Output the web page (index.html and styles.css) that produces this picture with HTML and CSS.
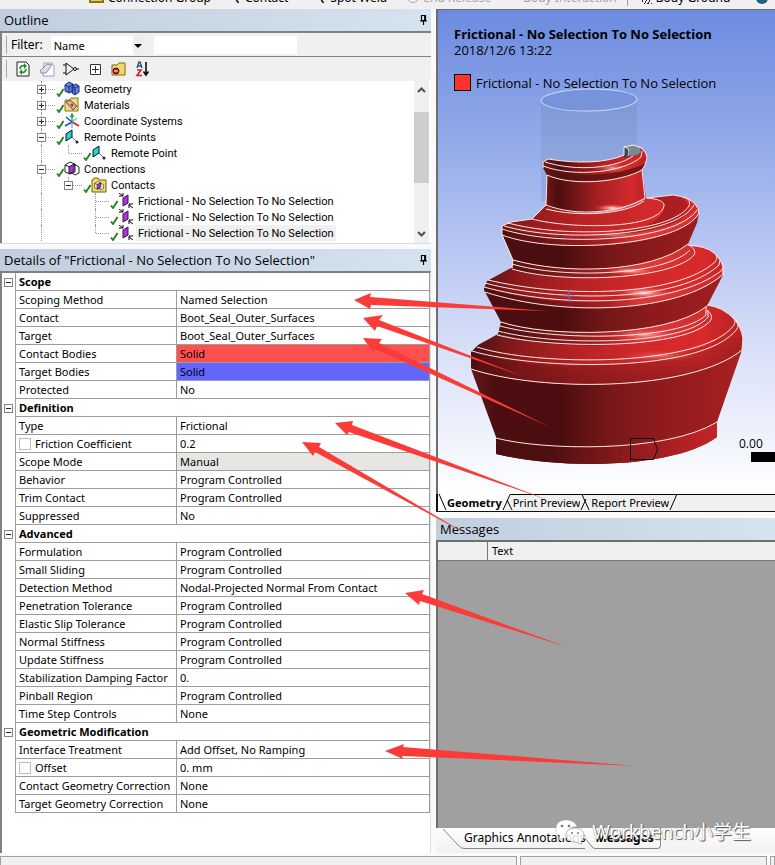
FILE: index.html
```html
<!DOCTYPE html>
<html lang="en">
<head>
<meta charset="utf-8">
<title>Mechanical - Connections</title>
<link rel="stylesheet" href="styles.css">
</head>
<body>
<svg class="defs" width="0" height="0" aria-hidden="true">
  <defs>
    <symbol id="check" viewBox="0 0 8 9"><path d="M1 5.5 3 8 7.5 1" fill="none" stroke="#16861f" stroke-width="1.8"/></symbol>
    <symbol id="pin" viewBox="0 0 8 10"><path d="M2.5.5h4v5h-4zM1 6h7M4.500 6v4M5.700 1v5" fill="none" stroke="#000" stroke-width="1.2"/></symbol>
    <symbol id="remote" viewBox="0 0 16 16"><path d="M2 5 8 1v7l-6 4z" fill="#20d4dc" stroke="#111"/><path d="m8 8 5 5" stroke="#667"/><circle cx="13" cy="13" r="1.500" fill="#224"/></symbol>
    <symbol id="contact" viewBox="0 0 16 16"><path d="m5 5 5-3v8l-5 3z" fill="#b233dc" stroke="#38104a"/><path d="m1 0 4 3M5 0v3H1M15 15l-4-3M11 15v-4h4" stroke="#000" fill="none"/></symbol>
    <symbol id="cubes" viewBox="0 0 16 16"><path d="m1 4 5-3 5 2v8l-5 2-5-2zM1 4l5 2 5-3M6 6v7M8 5l4-1 3 2v6l-4 2-3-2z" fill="#fff" stroke="#222"/><path d="m5 6 5-3v7l-5 3z" fill="#a03bd0" stroke="#301040"/></symbol>
  </defs>
</svg>

<nav class="ribbon" aria-label="Connections">
  <button class="cmd group"><i class="folder"></i>Connection Group</button>
  <button class="cmd contact"><i class="tick"></i>Contact</button>
  <button class="cmd spot"><i class="tick"></i>Spot Weld</button>
  <button class="cmd release" disabled><i class="ring"></i>End Release</button>
  <button class="cmd inter" disabled>Body Interaction</button>
  <button class="cmd ground"><i class="hatch"></i>Body Ground</button>
  <i class="globe"></i>
</nav>

<main class="work">
  <div class="left">
    <section class="outline">
      <h2 class="caption">Outline <svg class="pin" width="8" height="10"><use href="#pin"/></svg></h2>
      <div class="filter">
        <label for="by">Filter:</label>
        <span class="pick"><select id="by"><option>Name</option></select></span>
        <input type="text" aria-label="Filter text">
      </div>
      <div class="tools">
        <button aria-label="Refresh"><svg width="16" height="16" viewBox="0 0 16 16"><path d="M2 1h9l3 3v11H2z" fill="#fff" stroke="#222"/><path d="M5 8c0-3 3-4 5-3M11 8c0 3-3 4-5 3" fill="none" stroke="#1b9425" stroke-width="1.800"/><path d="m9 2 3 3-3 3zM7 8l-3 3 3 3z" fill="#1b9425"/></svg></button>
        <button aria-label="Clear"><svg width="16" height="16" viewBox="0 0 16 16"><path d="M5 2h8l2 3v10H4z" fill="#fff" stroke="#9aa0aa"/><path d="m1 10 7-7 5 1-6 8H2z" fill="#d8def0" stroke="#858ca8"/></svg></button>
        <button aria-label="Collapse"><svg width="16" height="16" viewBox="0 0 16 16"><path d="M0 4h3M0 12h3M3 2v12l8-6zM13 8h3" fill="none" stroke="#111"/><circle cx="12" cy="8" r="1.500" fill="#fff" stroke="#111"/></svg></button>
        <button aria-label="Expand"><svg width="16" height="16" viewBox="0 0 16 16"><path d="M3.500 3.500h10v10h-10zM5 8.500h7M8.500 5v7" fill="#fff" stroke="#333"/></svg></button>
        <button aria-label="Hide folders"><svg width="16" height="16" viewBox="0 0 16 16"><path d="M1 4h5l2-2h6v12H1z" fill="#f0da67" stroke="#7d6a1c"/><circle cx="5" cy="10" r="3" fill="#c9222c" stroke="#501"/><path d="M3 10h4" stroke="#fff"/></svg></button>
        <button aria-label="Sort"><svg width="16" height="16" viewBox="0 0 16 16"><path d="m2 7 2-6h1l2 6M3 5h3" fill="none" stroke="#275a85" stroke-width="1.500"/><path d="M2 9h4l-4 5.500h5" fill="none" stroke="#c32032" stroke-width="1.600"/><path d="M11 1v12M8.500 10.500 11 14l2.500-3.500" fill="none" stroke="#111" stroke-width="1.600"/></svg></button>
      </div>
      <div class="treebox">
        <ul class="tree">
          <li><span class="g v h"><button class="x plus" aria-label="Expand Geometry"></button></span><svg class="ic" viewBox="0 0 27 16"><use href="#check" x="1" y="7" width="8" height="9"/><path d="m10 4 4-3 4 2v7l-4 2-4-2zM17 5l4-2 3 2v6l-4 3-3-2z" fill="#5f85ec" stroke="#172b6d"/><path d="m10 4 4 2 4-3M14 6v6M17 5l3 2 4-2M20 7v6" fill="none" stroke="#172b6d"/></svg><span class="t">Geometry</span></li>
          <li><span class="g v h"><button class="x plus" aria-label="Expand Materials"></button></span><svg class="ic" viewBox="0 0 27 16"><use href="#check" x="1" y="7" width="8" height="9"/><path d="M10 3h5l1-2h7v13H10z" fill="#f1dd73" stroke="#857427"/><path d="m11 5 4-2 7 6-4 4z" fill="#d2b3ae" stroke="#664a4a"/><circle cx="17" cy="8" r="1.500" fill="#b33"/></svg><span class="t">Materials</span></li>
          <li><span class="g v h"><button class="x plus" aria-label="Expand Coordinate Systems"></button></span><svg class="ic" viewBox="0 0 27 16"><use href="#check" x="1" y="7" width="8" height="9"/><path d="M17 9V1m-1.500 3L17 1l1.500 3" stroke="#13a13b" fill="none" stroke-width="1.300"/><path d="m17 9-7 4M17 9l-6-5" stroke="#2448dd" stroke-width="1.500"/><path d="m17 9 7 4" stroke="#d22" stroke-width="2"/><path d="m17 9 5-4M17 9v6" stroke="#18b2c5"/></svg><span class="t">Coordinate Systems</span></li>
          <li><span class="g v h"><button class="x" aria-label="Collapse Remote Points"></button></span><svg class="ic" viewBox="0 0 27 16"><use href="#check" x="1" y="7" width="8" height="9"/><use href="#remote" x="9" width="16" height="16"/></svg><span class="t">Remote Points</span></li>
          <li><span class="g v"></span><span class="g e h"></span><svg class="ic" viewBox="0 0 27 16"><use href="#check" x="1" y="7" width="8" height="9"/><use href="#remote" x="9" width="16" height="16"/></svg><span class="t">Remote Point</span></li>
          <li><span class="g v h"><button class="x" aria-label="Collapse Connections"></button></span><svg class="ic" viewBox="0 0 27 16"><use href="#check" x="1" y="7" width="8" height="9"/><use href="#cubes" x="9" width="16" height="16"/></svg><span class="t">Connections</span></li>
          <li><span class="g v"></span><span class="g e h"><button class="x" aria-label="Collapse Contacts"></button></span><svg class="ic" viewBox="0 0 27 16"><use href="#check" x="1" y="7" width="8" height="9"/><path d="M10 3h1l1-2h4l1 2h7v12H10z" fill="#f0dc62" stroke="#6f5e14"/><use href="#cubes" x="12" y="4" width="10" height="10"/></svg><span class="t">Contacts</span></li>
          <li><span class="g v"></span><span class="g"></span><span class="g v h"></span><svg class="ic" viewBox="0 0 27 16"><use href="#check" x="1" y="7" width="8" height="9"/><use href="#contact" x="9" width="16" height="16"/></svg><span class="t">Frictional - No Selection To No Selection</span></li>
          <li><span class="g v"></span><span class="g"></span><span class="g v h"></span><svg class="ic" viewBox="0 0 27 16"><use href="#check" x="1" y="7" width="8" height="9"/><use href="#contact" x="9" width="16" height="16"/></svg><span class="t">Frictional - No Selection To No Selection</span></li>
          <li><span class="g v"></span><span class="g"></span><span class="g e h"></span><svg class="ic" viewBox="0 0 27 16"><use href="#check" x="1" y="7" width="8" height="9"/><use href="#contact" x="9" width="16" height="16"/></svg><span class="t sel">Frictional - No Selection To No Selection</span></li>
        </ul>
        <div class="scroll">
          <svg width="9" height="6" viewBox="0 0 9 6"><path d="m1 5 3.500-3.500L8 5" fill="none" stroke="#505050" stroke-width="2"/></svg>
          <i class="thumb"></i>
          <svg width="9" height="6" viewBox="0 0 9 6"><path d="m1 1 3.500 3.500L8 1" fill="none" stroke="#505050" stroke-width="2"/></svg>
        </div>
      </div>
    </section>

    <section class="details">
      <h2 class="caption">Details of "Frictional - No Selection To No Selection" <svg class="pin" width="8" height="10"><use href="#pin"/></svg></h2>
      <div class="sheet">
        <table class="props">
          <colgroup><col class="c0"><col class="c1"><col></colgroup>
          <tr class="sec"><td><button class="x" aria-label="Collapse Scope"></button></td><th colspan="2">Scope</th></tr>
          <tr><td></td><td>Scoping Method</td><td>Named Selection</td></tr>
          <tr><td></td><td>Contact</td><td>Boot_Seal_Outer_Surfaces</td></tr>
          <tr><td></td><td>Target</td><td>Boot_Seal_Outer_Surfaces</td></tr>
          <tr><td></td><td>Contact Bodies</td><td class="red">Solid</td></tr>
          <tr><td></td><td>Target Bodies</td><td class="blue">Solid</td></tr>
          <tr><td></td><td>Protected</td><td>No</td></tr>
          <tr class="sec"><td><button class="x" aria-label="Collapse Definition"></button></td><th colspan="2">Definition</th></tr>
          <tr><td></td><td>Type</td><td>Frictional</td></tr>
          <tr><td></td><td><label><input type="checkbox">Friction Coefficient</label></td><td>0.2</td></tr>
          <tr><td></td><td>Scope Mode</td><td class="grey">Manual</td></tr>
          <tr><td></td><td>Behavior</td><td>Program Controlled</td></tr>
          <tr><td></td><td>Trim Contact</td><td>Program Controlled</td></tr>
          <tr><td></td><td>Suppressed</td><td>No</td></tr>
          <tr class="sec"><td><button class="x" aria-label="Collapse Advanced"></button></td><th colspan="2">Advanced</th></tr>
          <tr><td></td><td>Formulation</td><td>Program Controlled</td></tr>
          <tr><td></td><td>Small Sliding</td><td>Program Controlled</td></tr>
          <tr><td></td><td>Detection Method</td><td>Nodal-Projected Normal From Contact</td></tr>
          <tr><td></td><td>Penetration Tolerance</td><td>Program Controlled</td></tr>
          <tr><td></td><td>Elastic Slip Tolerance</td><td>Program Controlled</td></tr>
          <tr><td></td><td>Normal Stiffness</td><td>Program Controlled</td></tr>
          <tr><td></td><td>Update Stiffness</td><td>Program Controlled</td></tr>
          <tr><td></td><td>Stabilization Damping Factor</td><td>0.</td></tr>
          <tr><td></td><td>Pinball Region</td><td>Program Controlled</td></tr>
          <tr><td></td><td>Time Step Controls</td><td>None</td></tr>
          <tr class="sec"><td><button class="x" aria-label="Collapse Geometric Modification"></button></td><th colspan="2">Geometric Modification</th></tr>
          <tr><td></td><td>Interface Treatment</td><td>Add Offset, No Ramping</td></tr>
          <tr><td></td><td><label><input type="checkbox">Offset</label></td><td>0. mm</td></tr>
          <tr><td></td><td>Contact Geometry Correction</td><td>None</td></tr>
          <tr><td></td><td>Target Geometry Correction</td><td>None</td></tr>
        </table>
      </div>
    </section>
  </div>

  <div class="right">
    <section class="view">
      <svg class="model" width="337" height="484" viewBox="438 10 337 484" role="img" aria-label="Boot seal model">
        <defs>
          <linearGradient id="wall" gradientUnits="userSpaceOnUse" x1="471" x2="743" y1="0" y2="0"><stop offset="0" stop-color="#65171a"/><stop offset=".09" stop-color="#4c0e10"/><stop offset=".33" stop-color="#4b0d0f"/><stop offset=".5" stop-color="#741719"/><stop offset=".66" stop-color="#8c1a1c"/><stop offset="1" stop-color="#a82022"/></linearGradient>
          <linearGradient id="flare" gradientUnits="userSpaceOnUse" x1="471" x2="743" y1="0" y2="0"><stop offset="0" stop-color="#4c1012"/><stop offset=".18" stop-color="#8c1a1c"/><stop offset=".4" stop-color="#b82225"/><stop offset=".65" stop-color="#d3292b"/><stop offset=".85" stop-color="#d8292b"/><stop offset="1" stop-color="#b52224"/></linearGradient>
          <linearGradient id="roll" gradientUnits="userSpaceOnUse" x1="471" x2="743" y1="0" y2="0"><stop offset="0" stop-color="#3c0b0d"/><stop offset=".25" stop-color="#671416"/><stop offset=".5" stop-color="#a92023"/><stop offset=".63" stop-color="#dd3a3b"/><stop offset="1" stop-color="#c42527"/></linearGradient>
          <linearGradient id="base" gradientUnits="userSpaceOnUse" x1="496" x2="717" y1="0" y2="0"><stop offset="0" stop-color="#4c0e10"/><stop offset=".25" stop-color="#4f0f11"/><stop offset=".6" stop-color="#8f1b1d"/><stop offset="1" stop-color="#c42527"/></linearGradient>
          <linearGradient id="neck" gradientUnits="userSpaceOnUse" x1="543" x2="647" y1="0" y2="0"><stop offset="0" stop-color="#7b191b"/><stop offset=".15" stop-color="#4c0e10"/><stop offset=".5" stop-color="#a11f21"/><stop offset=".85" stop-color="#d32a2c"/><stop offset="1" stop-color="#b92426"/></linearGradient>
          <linearGradient id="drop" x1="0" x2="0" y1="0" y2="1"><stop offset="0" stop-color="#4a0d0f" stop-opacity="0"/><stop offset="1" stop-color="#4a0d0f" stop-opacity=".75"/></linearGradient>
          <radialGradient id="shine"><stop offset="0" stop-color="#fff"/><stop offset=".25" stop-color="#ffb0ae" stop-opacity=".8"/><stop offset="1" stop-color="#f44" stop-opacity="0"/></radialGradient>
          <linearGradient id="glass" x1="0" x2="0" y1="0" y2="1"><stop offset="0" stop-color="#7895d2"/><stop offset="1" stop-color="#8fa9dc"/></linearGradient>
        </defs>
        <path d="M541 99v102h6V160h90V99z" fill="#86a0dc" opacity=".55"/>
        <path d="M541 99v62c25 5 60 3 83-6h13V99c-8 15-85 16-96 0z" fill="url(#glass)" opacity=".75"/>
        <ellipse cx="589" cy="100" rx="48" ry="11" fill="#7794da" stroke="#c9dcff" transform="rotate(-1 589 100)"/>

        <!-- base skirt -->
        <path d="M496 437 471 369C540 392 690 392 742 350L717 422V437C677 467 567 471 496 454z" fill="url(#wall)"/>
        <path d="M496 438C540 450 665 454 717 422V437C677 467 567 471 496 454z" fill="url(#base)"/>
        <path d="M471 369V352L478 345 498 334C550 349 658 346 707 305Q723 307 734 319Q741 327 743 338L742 350C690 392 540 392 471 369z" fill="url(#flare)"/>
        <path d="M472 352C537 375 687 371 737 329L743 338 742 350C690 392 540 392 471 369z" fill="url(#drop)" opacity=".6"/>
        <!-- third convolution -->
        <path d="M498 334 501 322C545 337 666 339 707 306L711 318C669 351 566 352 498 334z" fill="url(#roll)"/>
        <path d="M501 322 484 290C565 317 680 312 723 275L707 306C666 339 545 337 501 322z" fill="url(#wall)"/>
        <path d="M485 292 484 288 487 281 511 268C561 280 649 276 688 246Q706 246 714 253Q722 260 723 268L722 276C680 312 565 318 485 292z" fill="url(#flare)"/>
        <path d="M484 288C559 311 679 307 722 267V275C680 312 565 318 485 292z" fill="url(#roll)"/>
        <!-- second convolution -->
        <path d="M512 269 513 260C563 274 650 274 688 244L695 254C655 282 562 284 512 269z" fill="url(#roll)"/>
        <path d="M513 260 502 234C560 253 680 245 699 213L697 223 688 244C650 274 563 274 513 260z" fill="url(#wall)"/>
        <path d="M502 235V226L511 222 532 219 546 205C580 219 621 214 647 198L673 195Q689 197 695 204Q699 208 699 214C675 248 555 255 502 235z" fill="url(#flare)"/>
        <path d="M502 227C559 245 660 242 696 207L699 214C675 248 555 255 502 235z" fill="url(#roll)"/>
        <path d="M673 195c13 3 18 10 14 18-9 17-62 22-105 24 60-6 79-13 82-30 1-6-12-8-17-9z" fill="#98191e" opacity=".65"/>
        <!-- collar -->
        <path d="M547 173 546 206C577 218 622 213 646 198L642 168C615 183 578 184 547 173z" fill="url(#neck)"/>
        <path d="M547 175 543 168V162L548 159C578 164 608 163 624 155L640 148Q647 153 647 158L645 165 642 170C618 184 578 185 547 175z" fill="url(#neck)"/>
        <path d="M544 168 547 175C577 184 618 182 642 170L646 163C621 176 574 179 544 168z" fill="#561113" opacity=".75"/>
        <path d="M624 155V147L633 145 640 148C642 154 638 157 624 155z" fill="#768c91"/><path d="M624 147C629 148 631 152 629 157L624 158z" fill="#39484c"/>

        <ellipse cx="612" cy="208" rx="18" ry="4" fill="url(#shine)"/><ellipse cx="612" cy="168" rx="18" ry="5" fill="url(#shine)" opacity=".6"/>
        <ellipse cx="630" cy="271" rx="25" ry="4" fill="url(#shine)" opacity=".9"/><ellipse cx="644" cy="293" rx="27" ry="6" fill="url(#shine)"/>
        <ellipse cx="645" cy="335" rx="36" ry="6" fill="url(#shine)" opacity=".6"/><ellipse cx="660" cy="356" rx="42" ry="6" fill="url(#shine)" opacity=".35"/>
        <ellipse cx="615" cy="235" rx="35" ry="4" fill="url(#shine)" opacity=".4"/>
        <g fill="none" stroke="#ffe7df" stroke-width="1">
          <path d="M496 438C540 450 665 454 717 422"/>
          <path d="M471 369C540 392 690 392 742 350"/>
          <path d="M472 351C535 370 703 374 737 329c2-4 1-8-1-9"/>
          <path d="M477 347C535 366 703 368 734 325c2-5 1-8-2-9"/>
          <path d="M497 335c55 14 190 15 214-15 1-4 0-7-4-9"/>
          <path d="M498 331c55 15 188 15 210-14v-7"/>
          <path d="M500 326c55 15 180 15 206-11v-8"/>
          <path d="M501 322c44 15 165 17 206-16"/>
          <path d="M485 292C565 318 680 312 722 275"/>
          <path d="M484 287c76 21 190 20 237-16l2-3"/>
          <path d="M485 283c76 20 195 19 234-18l1-5"/>
          <path d="M488 280c76 18 188 17 227-18 3-4 2-6-1-9"/>
          <path d="M512 269c50 15 160 11 182-14 2-3 0-7-5-10"/>
          <path d="M512 264c50 15 153 12 178-14"/>
          <path d="M513 260c50 14 137 14 175-16"/>
          <path d="M502 235c53 20 180 11 197-22"/>
          <path d="M502 229c55 18 174 13 195-19"/>
          <path d="M504 226c55 16 171 12 190-21"/>
          <path d="M508 223c55 15 162 12 181-17 2-4-1-8-5-9"/>
          <path d="M532 219c38 10 127 11 132-13 1-5-7-7-17-8l26-3"/>
          <path d="M546 205c31 12 74 8 99-7M546 209c31 8 78 6 98-8M547 175c24 11 72 8 95-5"/>
          <path d="M543 166C575 178 625 172 641 157L642 151M545 162C577 172 617 168 633 156M543 168V162L548 159C578 164 606 163 624 155V147L633 145 642 148Q647 153 647 158L645 165 642 170 645 198M547 175 546 205 532 219 511 222 502 226V235L513 260 512 268M624 147c5 1 6 4 4 9"/>
          <path d="M673 195Q689 197 695 204 699 208 699 214M688 245Q706 246 714 253 722 260 723 268V275M707 305Q723 307 734 319 741 327 743 338L742 350"/>
        </g>
        <path d="M569 290v12M563 296h12" stroke="#6771c3"/>
        <path d="M630.500 438.500h23l4 11-4 10h-23z" fill="none" stroke="#120506"/>
        <text x="739" y="448">0.00</text>
        <path d="M751 452h24v10h-24z"/>
      </svg>
      <h1>Frictional - No Selection To No Selection</h1>
      <p>2018/12/6 13:22</p>
      <p class="legend"><i></i>Frictional - No Selection To No Selection</p>
    </section>
    <div class="viewtabs">
      <svg width="9" height="17"><path d="m1 0 7 16" stroke="#000"/></svg><button class="on">Geometry</button>
      <svg width="11" height="17"><path d="M1 17 8 .5h3V17z" fill="#f0f0f0"/><path d="M1 16 8 .5h3M5 6l5 10" fill="none" stroke="#000"/></svg><button>Print Preview</button>
      <svg width="11" height="17"><path d="M0 0h11v17H0z" fill="#f0f0f0"/><path d="M0 .5h11M1 16 6 5M2 .5 9 16" fill="none" stroke="#000"/></svg><button>Report Preview</button>
      <svg width="9" height="17"><path d="M0 0h9v17H0z" fill="#f0f0f0"/><path d="M0 .5h9M1 16 8 0" stroke="#000"/></svg>
      <i></i>
    </div>
    <section class="messages">
      <h2 class="caption">Messages</h2>
      <div class="list">
        <table><tr><th class="mark"></th><th>Text</th></tr></table>
      </div>
      <div class="msgtabs">
        <svg width="26" height="22"><path d="m5 1 15 16q3 4 7 3.500" fill="none" stroke="#888"/></svg>
        <button>Graphics Annotations</button>
        <svg width="10" height="22"><path d="m0 10 7 9q1 1 3 1.500" fill="none" stroke="#888"/></svg>
        <button class="on">Messages</button>
      </div>
    </section>
  </div>
</main>
<footer class="status"><span></span><span></span><span></span></footer>

<svg class="notes" width="775" height="865" aria-hidden="true">
  <g fill="#fb3b38">
    <path d="m354 300 17-7-1 4 177 14-176-6-1 4z"/>
    <path d="m363 318 20-3-4 5 143 56-145-50-2 5z"/>
    <path d="m363 338 19 1-3 4 171 84-175-78-2 3z"/>
    <path d="m335 423 18-2-1 4 196 75-199-68-2 3z"/>
    <path d="m302 442 19 1-2 4 151 89-155-84-2 4z"/>
    <path d="m405 593 19-3-2 4 145 53-147-46-1 4z"/>
    <path d="m385 751 19-7-1 3 233 19-234-10 1 3z"/>
  </g>
</svg>
<div class="mark-by">
  <svg width="30" height="26" viewBox="0 0 30 26"><path d="M11 1C4 1 1 5 1 10c0 4 2 6 4 7l-1 4 4-2h4c-2-7 4-12 10-11-1-4-5-7-11-7z" fill="#fff" stroke="#aaa" stroke-width=".5"/><path d="M20 9c-6 0-9 3-9 7s4 7 9 7l4 1 3 1-1-3c2-1 3-3 3-6 0-4-4-7-9-7z" fill="#fff" fill-opacity=".85" stroke="#888" stroke-width=".6"/><g fill="#777"><circle cx="7" cy="7" r="1.300"/><circle cx="14" cy="7" r="1.300"/><circle cx="17" cy="14" r="1"/><circle cx="23" cy="14" r="1"/></g></svg>
  <span>Workbench小学生</span>
</div>
</body>
</html>
```
FILE: styles.css
```css
* { box-sizing: border-box; }
body {
  margin: 0;
  position: relative;
  display: flex;
  flex-direction: column;
  min-height: 100vh;
  overflow: hidden;
  background: #f0f0f0;
  color: #000;
  font: 11px/16px "Noto Sans", "Open Sans", sans-serif;
}
h1, h2, p, ul { margin: 0; padding: 0; }
button { padding: 0; border: 0; background: none; color: inherit; font: inherit; }
.defs { position: absolute; }

.ribbon {
  display: flex;
  align-items: flex-end;
  height: 9px;
  padding: 0 0 3px 89px;
  overflow: hidden;
  font-size: 12px;
  white-space: nowrap;
}
.cmd { display: flex; align-items: flex-end; gap: 4px; line-height: 16px; flex: none; }
.cmd:disabled { color: #a5a5a5; }
.contact { margin-left: 24px; }
.spot { margin-left: 32px; }
.release { margin-left: 20px; }
.inter { margin-left: 32px; }
.ground { margin-left: 10px; padding-left: 14px; border-left: 1px solid #a0a0a0; }
.folder { width: 15px; height: 10px; margin-bottom: 3px; background: #e8cf4c; border: 2px solid #8a7416; }
.tick { width: 6px; height: 8px; margin-bottom: 3px; border-left: 2px solid #222; transform: skewX(30deg); }
.ring { width: 12px; height: 10px; margin-bottom: 3px; border: 1px solid #aaa; border-radius: 0 0 6px 6px; }
.hatch { width: 10px; height: 9px; margin-bottom: 2px; background: repeating-linear-gradient(120deg, #222 0 1px, #f0f0f0 1px 3px); }
.globe { width: 12px; height: 12px; flex: none; margin: 0 0 2px 26px; border-radius: 6px; background: #2a5d86; }

.work { display: grid; grid-template-columns: minmax(0, 432fr) minmax(0, 343fr); flex: 1; }
.left, .right { display: flex; flex-direction: column; min-width: 0; }
.left { background: #fafafa; padding-right: 1px; }
.right { background: #fafafa; padding-left: 4px; }
.caption {
  display: flex;
  justify-content: space-between;
  align-items: center;
  height: 22px;
  padding: 0 4px;
  background: linear-gradient(90deg, #c0cedd, #d5e3f0);
  font: 13px/18px "Open Sans", "Noto Sans", sans-serif;
  white-space: nowrap;
}
.outline { height: 235px; background: #f0f0f0; border-bottom: 1px solid #ddd; }
.filter {
  display: flex;
  align-items: center;
  height: 26px;
  padding-left: 2px;
  border: solid #808080;
  border-width: 2px 0 1px 2px;
  font-size: 12px;
}
.filter::before, .tools::before { content: ""; width: 2px; height: 18px; border: solid #aaa; border-width: 0 1px 0 0; margin-right: 4px; }
.pick { position: relative; width: 94px; height: 19px; margin: 1px 9px 0 8px; }
.pick::after {
  content: "";
  position: absolute;
  right: 3px;
  top: 8px;
  border: 4px solid transparent;
  border-top-color: #000;
  pointer-events: none;
}
.filter select {
  appearance: none;
  width: 100%;
  height: 100%;
  padding: 1px 3px 0;
  border: 0;
  border-radius: 0;
  background: linear-gradient(90deg, #fff 82px, #eee 82px);
  color: #000;
  font: inherit;
  font-size: 11px;
}
.filter input { width: 143px; height: 18px; border: 0; padding: 0 3px; background: #fff; }
.tools { display: flex; align-items: center; height: 24px; padding-left: 2px; border-left: 2px solid #808080; }
.tools button { width: 16px; height: 16px; margin-right: 8px; }
.tools::before { margin-right: 8px; }
.tools svg { display: block; }

.treebox { display: flex; height: 162px; border-left: 2px solid #808080; background: #fff; overflow: hidden; }
.tree { flex: 1; padding-left: 26px; list-style: none; font: 11px/16px Roboto, sans-serif; }
.tree li { display: flex; height: 16px; align-items: center; }
.g { position: relative; flex: none; width: 27px; height: 16px; display: flex; justify-content: center; align-items: center; }
.g.v::before, .g.e::before, .g.h::after { content: ""; position: absolute; border: 0 dotted #999; }
.g.v::before { left: 13px; top: 0; height: 16px; border-left-width: 1px; }
.g.e::before { left: 13px; top: 0; height: 8px; border-left-width: 1px; }
.g.h::after { left: 14px; right: 0; top: 8px; border-top-width: 1px; }
.x {
  position: relative;
  z-index: 1;
  flex: none;
  display: block;
  width: 9px;
  height: 9px;
  border: 1px solid #848484;
  background: linear-gradient(#222, #222) center / 5px 1px no-repeat #fff;
}
.x.plus { background: linear-gradient(#222, #222) center / 5px 1px no-repeat, linear-gradient(#222, #222) center / 1px 5px no-repeat #fff; }
.ic { flex: none; width: 27px; height: 16px; }
.t { padding: 2px 2px 0; line-height: 14px; white-space: nowrap; }
.sel { background: #f0f0f0; }
.scroll { display: flex; flex-direction: column; align-items: center; width: 15px; margin-right: 2px; padding: 6px 0; background: #f0f0f0; }
.thumb { width: 15px; height: 71px; margin: 19px 0 auto; background: #cdcdcd; }

.details { flex: 1; display: flex; flex-direction: column; margin-top: 5px; }
.sheet { flex: 1; border: solid #808080; border-width: 2px 1px 0 2px; background: #fff; border-right-color: #ddd; }
.props { width: 100%; border-spacing: 0; table-layout: fixed; }
.c0 { width: 14px; }
.c1 { width: 161px; }
.props td, .props th {
  height: 18px;
  padding: 0 3px;
  border: solid #9b9e9e;
  border-width: 0 1px 1px 0;
  line-height: 17px;
  text-align: left;
  white-space: nowrap;
}
.props td:first-child { padding: 0 0 0 2px; border-bottom: 0; }
.props .red { background: #ff5050; }
.props .blue { background: #6464ff; }
.props .grey { background: #e7e6e2; }
.props label { display: flex; align-items: center; gap: 4px; }
.props input { appearance: none; width: 12px; height: 12px; margin: 0; border: 1px solid #bbb; background: #fff; }

.view {
  position: relative;
  height: 485px;
  padding: 16px 0 0 16px;
  border: solid #6e6e6e;
  border-width: 1px 0 0 2px;
  overflow: hidden;
  background: linear-gradient(#6c8bdf, #90a8e9 25%, #b9c7f2 50%, #dfe5f9 75%, #fff);
  font: 13px/16px "Open Sans", "Noto Sans", sans-serif;
  white-space: nowrap;
}
.model { position: absolute; left: 0; top: 0; font-size: 12px; }
.view h1, .view p { position: relative; }
.view h1 { font-size: 13px; line-height: 16px; }
.view .legend { display: flex; align-items: center; gap: 5px; margin-top: 16px; }
.legend i { width: 17px; height: 17px; border: 1px solid #000; background: #ff3232; }
.viewtabs { display: flex; height: 18px; border: solid #111; border-width: 0 0 1px 2px; background: #fff; white-space: nowrap; }
.viewtabs svg { flex: none; }
.viewtabs button { border-top: 1px solid #000; background: #f0f0f0; line-height: 16px; }
.viewtabs .on { background: #fff; border-color: #fff; font-weight: 700; }
.viewtabs i { flex: 1; border-top: 1px solid #000; background: #f0f0f0; }
.messages { flex: 1; display: flex; flex-direction: column; margin-top: 6px; }
.list { flex: 1; border: solid #6e6e6e; border-width: 2px 0 0 2px; background: #a0a0a0; }
.list table { width: 100%; border-spacing: 0; background: #f0f0f0; }
.list th { height: 19px; padding: 0 4px; border-bottom: 1px solid #777; font-weight: 400; text-align: left; }
.list .mark { width: 50px; border-right: 1px solid #777; }
.msgtabs { display: flex; height: 25px; padding: 0 0 3px 2px; background: linear-gradient(#fff, #f0f0f0); font-size: 12px; white-space: nowrap; }
.msgtabs svg { flex: none; }
.msgtabs button { height: 21px; border-bottom: 1px solid #888; }
.msgtabs .on { padding: 0 6px 0 0; border-right: 1px solid #888; border-radius: 0 0 4px 0; font-weight: 700; }

.status { display: grid; grid-template-columns: 517fr 247fr 5fr; gap: 3px; height: 12px; padding-top: 3px; background: #fafafa; }
.status span { border: solid #a0a0a0; border-width: 1px 1px 0; background: #f0f0f0; }

.notes { position: absolute; left: 0; top: 0; pointer-events: none; }
.mark-by {
  position: absolute;
  right: 24px;
  bottom: 20px;
  display: flex;
  align-items: center;
  gap: 7px;
  color: #fff;
  font: 19px/26px "Noto Sans", "Noto Sans CJK SC", sans-serif;
  text-shadow: 1px 1px 1px #555, 0 0 1px #777;
  pointer-events: none;
}
```
